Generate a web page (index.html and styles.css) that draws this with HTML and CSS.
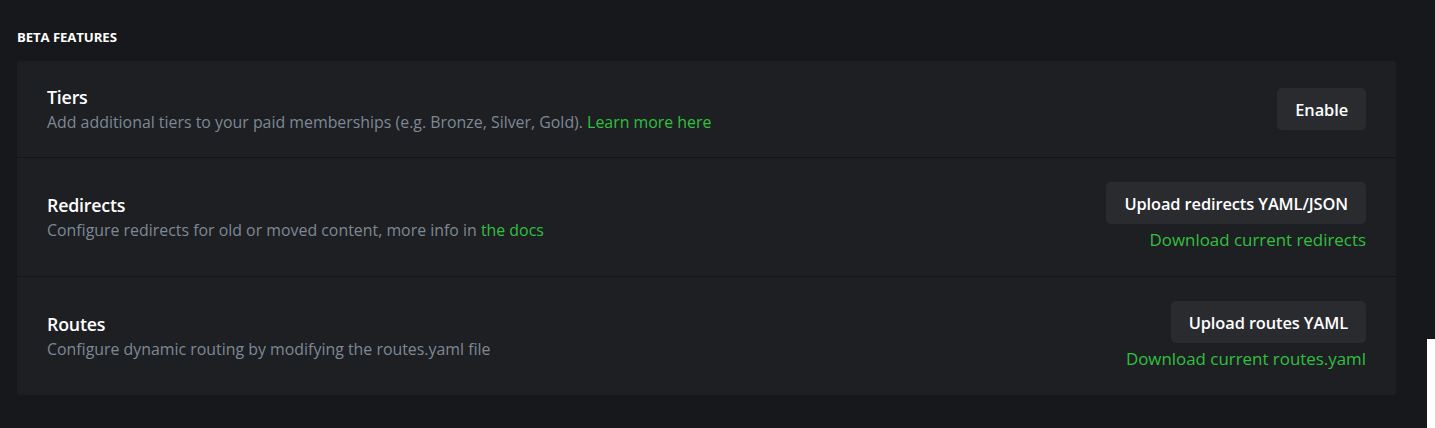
FILE: index.html
```html
<!DOCTYPE html>
<html lang="en">
<head>
<meta charset="utf-8">
<title>Beta features</title>
<link rel="stylesheet" href="styles.css">
</head>
<body>
<main class="page">
  <h4 class="section-title">Beta features</h4>
  <section class="card">
    <div class="row">
      <div class="info">
        <h5 class="row-title">Tiers</h5>
        <p class="row-desc">Add additional tiers to your paid memberships (e.g. Bronze, Silver, Gold). <a class="link" href="#">Learn more here</a></p>
      </div>
      <div class="actions">
        <button class="btn">Enable</button>
      </div>
    </div>
    <div class="row">
      <div class="info">
        <h5 class="row-title">Redirects</h5>
        <p class="row-desc">Configure redirects for old or moved content, more info in <a class="link" href="#">the docs</a></p>
      </div>
      <div class="actions">
        <button class="btn">Upload redirects YAML/JSON</button>
        <a class="link download" href="#">Download current redirects</a>
      </div>
    </div>
    <div class="row">
      <div class="info">
        <h5 class="row-title">Routes</h5>
        <p class="row-desc">Configure dynamic routing by modifying the routes.yaml file</p>
      </div>
      <div class="actions">
        <button class="btn">Upload routes YAML</button>
        <a class="link download" href="#">Download current routes.yaml</a>
      </div>
    </div>
  </section>
</main>
<div class="corner-sheet"></div>
</body>
</html>
```

FILE: styles.css
```css
html, body {
  margin: 0;
  padding: 0;
  background: #17181b;
  height: 100%;
  overflow: hidden;
}

body {
  font-family: "Open Sans", "Noto Sans", sans-serif;
  color: #ffffff;
}

.page {
  padding: 28px 39px 0 17px;
}

.section-title {
  margin: 0 0 15px 0;
  font-size: 13.2px;
  font-weight: 700;
  text-transform: uppercase;
  line-height: 18px;
  letter-spacing: -0.1px;
  color: #ffffff;
}

.card {
  background: #1e1f23;
  border-radius: 4px;
}

.row {
  display: flex;
  align-items: center;
  justify-content: space-between;
  padding: 24px 30px;
  border-bottom: 1px solid #141518;
}

.row:last-child {
  border-bottom: none;
}

.row-title {
  margin: 0;
  font-size: 17.8px;
  font-weight: 600;
  line-height: 24px;
  letter-spacing: -0.2px;
  color: #ffffff;
}

.row-desc {
  margin: 2px 0 0 0;
  font-size: 15.9px;
  line-height: 22px;
  color: #7d8994;
}

.link {
  color: #30c03f;
  text-decoration: none;
}

.actions {
  display: flex;
  flex-direction: column;
  align-items: flex-end;
}

.btn {
  height: 42px;
  padding: 0 18px;
  border: none;
  border-radius: 5px;
  background: #2a2b2f;
  color: #ffffff;
  font-family: inherit;
  font-size: 16.4px;
  font-weight: 600;
  letter-spacing: -0.1px;
}

.download {
  margin-top: 4px;
  font-size: 16.9px;
  line-height: 24px;
}

.corner-sheet {
  position: fixed;
  left: 1427px;
  top: 339px;
  width: 8px;
  height: 89px;
  background: #ffffff;
}
```
